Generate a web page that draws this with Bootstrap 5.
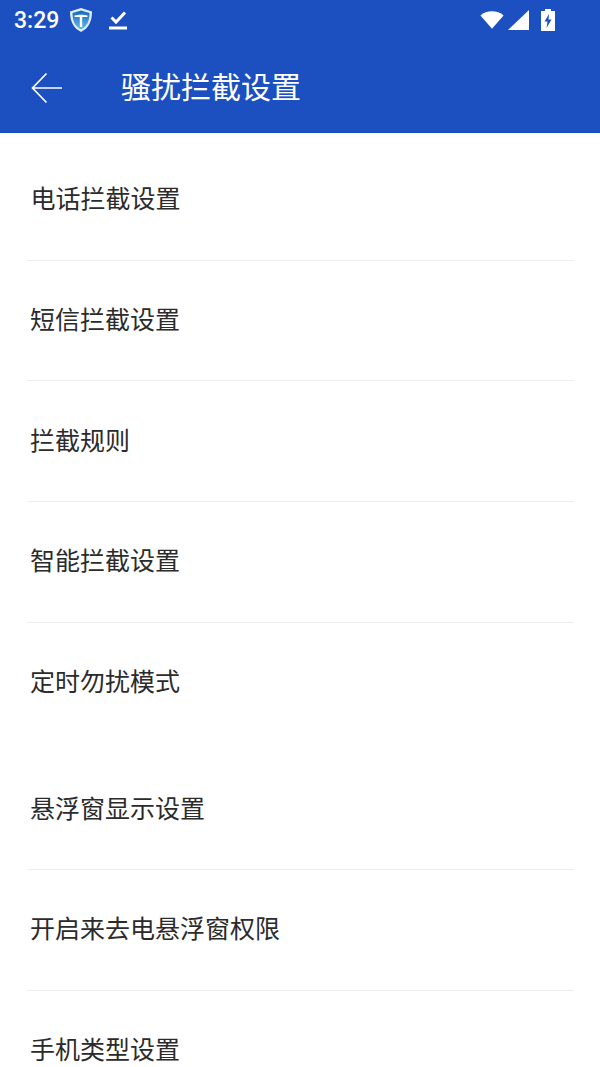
<!DOCTYPE html>
<html lang="zh-CN">
<head>
    <meta charset="UTF-8">
    <meta name="viewport" content="width=device-width, initial-scale=1.0">
    <title>骚扰拦截设置</title>
    <link href="https://cdn.jsdelivr.net/npm/bootstrap@5.3.0/dist/css/bootstrap.min.css" rel="stylesheet">
    <style>
        body {
            width: 600px;
            height: 1067px;
            overflow: hidden;
            background: #fff;
            font-family: "Noto Sans CJK SC", "Noto Sans", sans-serif;
        }
        .app-head {
            height: 133px;
            background: #1c4fbf;
            color: #fff;
        }
        .status-row {
            height: 40px;
            padding: 0 45px 0 14px;
        }
        .status-time {
            font-family: Roboto, sans-serif;
            font-size: 23px;
            font-weight: 500;
            line-height: 1;
            width: 46px;
        }
        .title-row {
            height: 93px;
            padding: 0 0 4px 31px;
        }
        .back-arrow {
            margin-top: 6px;
        }
        .title-text {
            font-size: 30px;
            line-height: 1;
            margin-left: 59px;
        }
        .set-list {
            padding: 0 26px 0 27px;
        }
        .set-row {
            height: 120.6px;
            font-size: 25px;
            line-height: 1;
            color: #2b2b2b;
            padding: 0 0 4px 3px;
            border-bottom: 1px solid #eeeeee;
        }
        .set-row.first-row {
            height: 127.8px;
            padding-top: 8px;
            padding-bottom: 5px;
            padding-left: 3.5px;
        }
        .set-row.no-line {
            height: 127px;
            border-bottom: 0;
            padding-bottom: 12px;
        }
        .set-row.last-row {
            height: 76.2px;
            border-bottom: 0;
            padding-top: 40px;
            padding-bottom: 0;
        }
    </style>
</head>
<body>
    <div class="app-head">
        <!-- 状态栏 -->
        <div class="status-row d-flex align-items-center">
            <span class="status-time">3:29</span>
            <svg class="ms-2" width="26" height="28" viewBox="0 0 26 28">
                <defs>
                    <linearGradient id="shieldFill" x1="0" y1="0" x2="0" y2="1">
                        <stop offset="0" stop-color="#1668bd"/>
                        <stop offset="1" stop-color="#63b9ee"/>
                    </linearGradient>
                </defs>
                <path d="M13 2 L24 5.5 C24 15 21 22 13 26 C5 22 2 15 2 5.5 Z" fill="#dfeefa"/>
                <path d="M13 4.5 L21.5 7 C21.5 15 19 20.5 13 23.5 C7 20.5 4.5 15 4.5 7 Z" fill="url(#shieldFill)"/>
                <path d="M6.5 9.5 C10 8.5 16 8.5 19.5 9.5 V11 H14.2 V21 H11.8 V11 H6.5 Z" fill="#fff"/>
            </svg>
            <svg style="margin-left:14px" width="20" height="22" viewBox="0 0 20 22">
                <path d="M3.5 8.5 L8 13 L17 3.5" fill="none" stroke="#fff" stroke-width="3"/>
                <rect x="1" y="17.5" width="18" height="3" fill="#fff"/>
            </svg>
            <svg class="ms-auto" width="24" height="20" viewBox="0 0 26 20">
                <path d="M0.5 5 C7 -1 19 -1 25.5 5 L13 19.5 Z" fill="#fff"/>
            </svg>
            <svg class="ms-1" width="21" height="20" viewBox="0 0 21 20">
                <path d="M21 0 V20 H0 Z" fill="#fff"/>
            </svg>
            <svg style="margin-left:12px" width="14" height="22" viewBox="0 0 14 22">
                <path fill-rule="evenodd" d="M4 0 H10 V2 H14 V22 H0 V2 H4 Z M8 5 L3.5 12.5 H6.5 L5.5 19 L10.5 10.5 H7.5 Z" fill="#fff"/>
            </svg>
        </div>
        <!-- 标题栏 -->
        <div class="title-row d-flex align-items-center">
            <svg class="back-arrow" width="31" height="32" viewBox="0 0 31 32">
                <path d="M15.5 1.5 L1.5 16 L15.5 30.5 M1.5 16 H31" fill="none" stroke="#fff" stroke-width="1.7"/>
            </svg>
            <span class="title-text">骚扰拦截设置</span>
        </div>
    </div>

    <!-- 设置列表 -->
    <div class="set-list">
        <div class="set-row first-row d-flex align-items-center">电话拦截设置</div>
        <div class="set-row d-flex align-items-center">短信拦截设置</div>
        <div class="set-row d-flex align-items-center">拦截规则</div>
        <div class="set-row d-flex align-items-center">智能拦截设置</div>
        <div class="set-row no-line d-flex align-items-center">定时勿扰模式</div>
        <div class="set-row d-flex align-items-center">悬浮窗显示设置</div>
        <div class="set-row d-flex align-items-center">开启来去电悬浮窗权限</div>
        <div class="set-row last-row d-flex align-items-center">手机类型设置</div>
    </div>

    <script src="https://cdn.jsdelivr.net/npm/bootstrap@5.3.0/dist/js/bootstrap.bundle.min.js"></script>
</body>
</html>
